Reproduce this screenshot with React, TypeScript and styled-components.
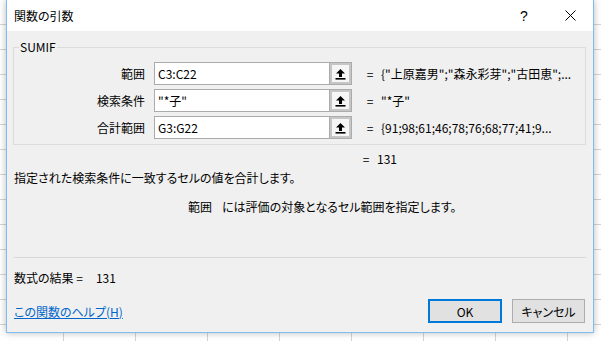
import React from 'react';
import styled, { createGlobalStyle } from 'styled-components';

const GlobalStyle = createGlobalStyle`
  html, body {
    margin: 0;
    padding: 0;
    background: #fff;
  }
  body {
    font-family: 'Noto Sans CJK JP', 'Noto Sans', sans-serif;
    font-size: 12px;
    font-feature-settings: 'palt';
    color: #000;
  }
`;

const Sheet = styled.div`
  width: 601px;
  height: 341px;
  overflow: hidden;
  padding-left: 6px;
  box-sizing: border-box;
  background-color: #fff;
  background-image: linear-gradient(
      to bottom,
      transparent 24px,
      #d4d4d4 24px,
      #d4d4d4 25px
    ),
    linear-gradient(to right, transparent 71px, #d4d4d4 71px, #d4d4d4 72px);
  background-size: 100% 25px, 72px 100%;
  background-position: 0 0, -8px 0;
`;

const Dialog = styled.div`
  width: 588px;
  height: 333px;
  box-sizing: border-box;
  border: 1px solid #7fbcef;
  border-top: none;
  background: #f0f0f0;
  box-shadow: 0 0 7px rgba(0, 0, 0, 0.28);
  display: flex;
  flex-direction: column;
`;

const TitleBar = styled.div`
  height: 31px;
  background: #fff;
  display: flex;
  align-items: center;
  padding-left: 7px;
`;

const Title = styled.div`
  flex: 1;
  font-size: 12px;
  line-height: 16px;
`;

const CaptionButton = styled.div`
  width: 46px;
  height: 31px;
  display: flex;
  align-items: center;
  justify-content: center;
  font-family: 'Liberation Sans', sans-serif;
  font-size: 14px;
`;

const Body = styled.div`
  flex: 1;
  display: flex;
  flex-direction: column;
  padding: 0 7px 9px 7px;
`;

const Group = styled.fieldset`
  margin: 8px 0 0 -1px;
  padding: 7px 0 5px 0;
  border: 1px solid #dcdcdc;
  display: flex;
  flex-direction: column;
  gap: 4px;
`;

const Legend = styled.legend`
  margin-left: 5px;
  padding: 0 1px;
  font-size: 12px;
  line-height: 16px;
`;

const ArgRow = styled.div`
  display: flex;
  align-items: center;
  height: 23px;
`;

const ArgLabel = styled.div`
  width: 131px;
  text-align: right;
  margin-right: 9px;
  line-height: 16px;
`;

const ArgInput = styled.div`
  width: 175px;
  height: 23px;
  box-sizing: border-box;
  border: 1px solid #ababab;
  border-right: none;
  background: #fff;
  padding-left: 3px;
  display: flex;
  align-items: center;
  font-size: 12px;
`;

const RefButton = styled.div`
  width: 23px;
  height: 23px;
  box-sizing: border-box;
  border: 1px solid #ababab;
  box-shadow: inset 0 0 0 2px #c6c6c6;
  background: #f6f6f6;
  display: flex;
  align-items: center;
  justify-content: center;
`;

const Equals = styled.div<{ $offset?: number }>`
  margin-left: ${({ $offset }) => $offset ?? 14}px;
  width: 8px;
  text-align: center;
`;

const Value = styled.div`
  margin-left: 7px;
  white-space: nowrap;
  overflow: hidden;
`;

const TotalRow = styled.div`
  display: flex;
  height: 16px;
  line-height: 16px;
  margin-top: 6px;
`;

const Description = styled.div`
  margin-top: 3px;
  line-height: 16px;
`;

const ArgHelp = styled.div`
  margin-top: 13px;
  padding-left: 174px;
  line-height: 16px;
  white-space: nowrap;
`;

const ArgName = styled.span`
  margin-right: 10px;
`;

const Separator = styled.div`
  margin-top: 42px;
  height: 1px;
  background: #d7d7d7;
`;

const Result = styled.div`
  margin-top: 12px;
  line-height: 16px;
  display: flex;
`;

const ResultValue = styled.span`
  margin-left: 13px;
`;

const Footer = styled.div`
  margin-top: 13px;
  display: flex;
  align-items: center;
  gap: 10px;
  padding-right: 1px;
`;

const HelpLink = styled.a`
  flex: 1;
  color: #0066cc;
  text-decoration: underline;
  line-height: 16px;
  margin-top: 1px;
`;

const DialogButton = styled.div<{ $primary?: boolean }>`
  width: ${({ $primary }) => ($primary ? 74 : 73)}px;
  height: 24px;
  box-sizing: border-box;
  background: #e1e1e1;
  border: ${({ $primary }) =>
    $primary ? '2px solid #0078d7' : '1px solid #adadad'};
  display: flex;
  align-items: center;
  justify-content: center;
`;

const UpArrowIcon = () => (
  <svg width="11" height="12" viewBox="0 0 11 12">
    <path d="M5.5 1 L10 5.5 L7 5.5 L7 9 L4 9 L4 5.5 L1 5.5 Z" fill="#000" />
    <rect x="0.5" y="10" width="10" height="1.6" fill="#000" />
  </svg>
);

const CloseIcon = () => (
  <svg width="11" height="11" viewBox="0 0 11 11">
    <path d="M0.5 0.5 L10.5 10.5 M10.5 0.5 L0.5 10.5" stroke="#000" strokeWidth="1" />
  </svg>
);

const args = [
  { label: '範囲', input: 'C3:C22', value: '{"上原嘉男";"森永彩芽";"古田恵";...' },
  { label: '検索条件', input: '"*子"', value: '"*子"' },
  { label: '合計範囲', input: 'G3:G22', value: '{91;98;61;46;78;76;68;77;41;9...' },
];

export default function App() {
  return (
    <>
      <GlobalStyle />
      <Sheet>
        <Dialog>
          <TitleBar>
            <Title>関数の引数</Title>
            <CaptionButton>?</CaptionButton>
            <CaptionButton>
              <CloseIcon />
            </CaptionButton>
          </TitleBar>
          <Body>
            <Group>
              <Legend>SUMIF</Legend>
              {args.map((a) => (
                <ArgRow key={a.label}>
                  <ArgLabel>{a.label}</ArgLabel>
                  <ArgInput>{a.input}</ArgInput>
                  <RefButton>
                    <UpArrowIcon />
                  </RefButton>
                  <Equals>=</Equals>
                  <Value>{a.value}</Value>
                </ArgRow>
              ))}
            </Group>
            <TotalRow>
              <Equals $offset={348}>=</Equals>
              <Value>131</Value>
            </TotalRow>
            <Description>指定された検索条件に一致するセルの値を合計します。</Description>
            <ArgHelp>
              <ArgName>範囲</ArgName>には評価の対象となるセル範囲を指定します。
            </ArgHelp>
            <Separator />
            <Result>
              数式の結果 =<ResultValue>131</ResultValue>
            </Result>
            <Footer>
              <HelpLink>この関数のヘルプ(H)</HelpLink>
              <DialogButton $primary>OK</DialogButton>
              <DialogButton>キャンセル</DialogButton>
            </Footer>
          </Body>
        </Dialog>
      </Sheet>
    </>
  );
}
